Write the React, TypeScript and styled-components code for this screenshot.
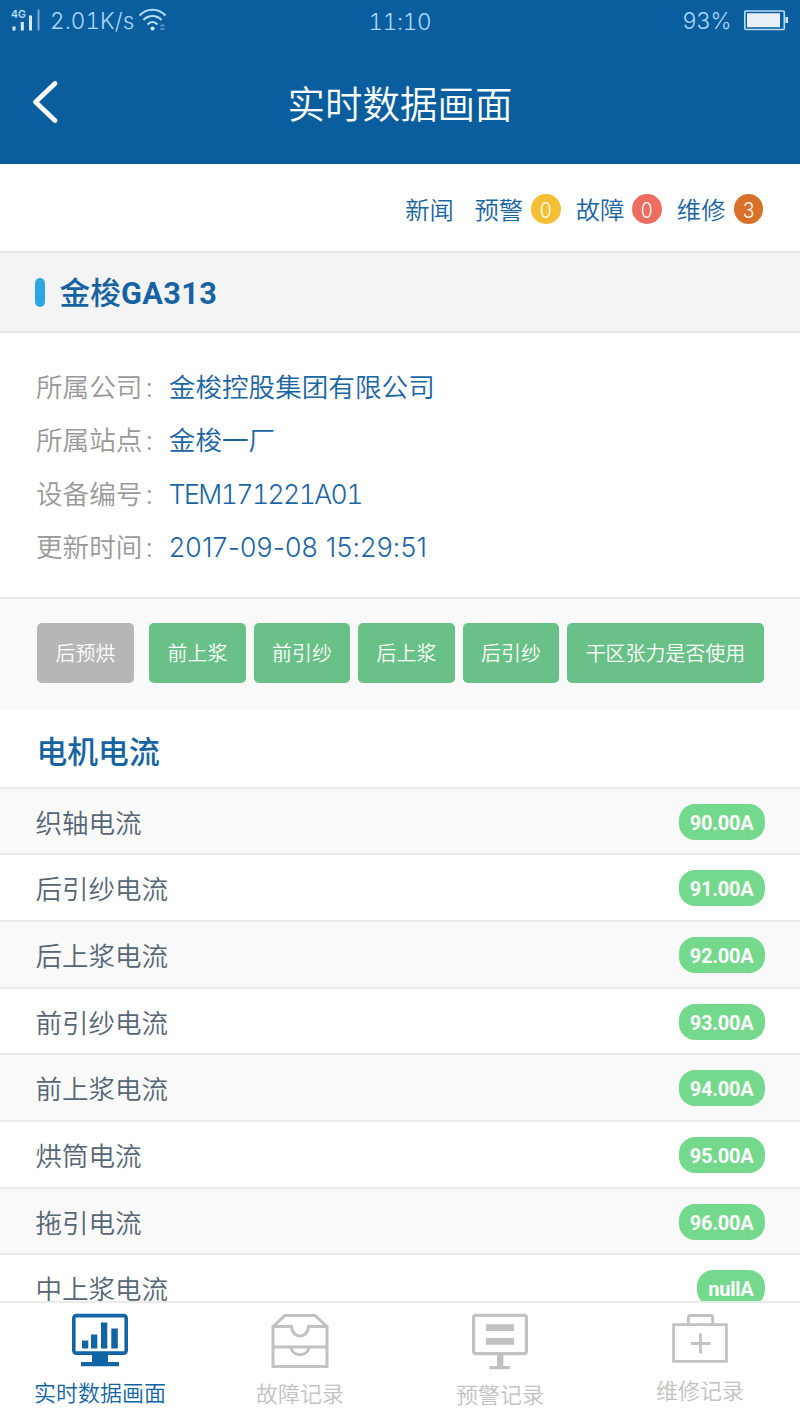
import React from "react";
import styled, { createGlobalStyle } from "styled-components";

const cjk = `"Noto Sans CJK SC", sans-serif`;

const GlobalStyle = createGlobalStyle`
  * { box-sizing: border-box; }
  body {
    margin: 0;
    background: #fff;
    font-family: Inter, ${cjk};
    font-weight: 350;
    overflow: hidden;
  }
`;

const Screen = styled.div`
  width: 800px;
  height: 1422px;
  display: flex;
  flex-direction: column;
  overflow: hidden;
  background: #fff;
`;

const Header = styled.header`
  flex: none;
  height: 164px;
  background: #0a5e9e;
`;

const StatusBar = styled.div`
  display: grid;
  grid-template-columns: 1fr auto 1fr;
  height: 42px;
  padding: 0 11px 0 11px;
  color: #a9d8fb;
  font-size: 22.5px;
  font-weight: 300;
  line-height: 42px;
`;

const StatusGroup = styled.div<{ $end?: boolean }>`
  display: flex;
  justify-content: ${(p) => (p.$end ? "flex-end" : "flex-start")};
`;

const StatusText = styled.span<{ $spacing?: number }>`
  letter-spacing: ${(p) => p.$spacing ?? 0}px;
  font-variant-numeric: tabular-nums;
  white-space: pre;
`;

const Clock = styled(StatusText)`
  padding: 1px 0 0 0;
`;

const SignalIcon = styled.svg`
  margin: 8px 9px 0 0;
`;

const WifiIcon = styled.svg`
  margin: 7px 0 0 4px;
`;

const BatteryIcon = styled.svg`
  margin: 9px 0 0 12px;
`;

const NavBar = styled.div`
  display: grid;
  grid-template-columns: 100px 1fr 100px;
  height: 122px;
`;

const BackButton = styled.button`
  display: flex;
  align-items: center;
  height: 120px;
  padding: 0 0 0 32px;
  border: 0;
  background: none;
`;

const PageTitle = styled.h1`
  margin: 0;
  color: #fff;
  font-size: 37.5px;
  font-weight: 350;
  line-height: 126px;
  text-align: center;
`;

const QuickLinks = styled.nav`
  flex: none;
  display: flex;
  justify-content: flex-end;
  height: 87px;
  padding: 0 37px 0 0;
`;

const QuickLink = styled.a`
  display: flex;
  margin-left: 15px;
  color: #1b65a3;
  font-size: 24.4px;
  line-height: 93px;

  &:first-child { margin-right: 5.5px; }
`;

const CountBadge = styled.span<{ $color: string }>`
  width: 29.4px;
  height: 30px;
  margin: 29.5px 0 0 8px;
  border-radius: 50%;
  background: ${(p) => p.$color};
  color: #fff;
  font-size: 22px;
  line-height: 32px;
  text-align: center;

  span {
    display: block;
    transform: scaleX(0.88);
  }
`;

const DeviceHeading = styled.div`
  flex: none;
  display: flex;
  align-items: center;
  gap: 15px;
  height: 82px;
  padding: 0 35px;
  border-top: 2px solid #e9e9e9;
  border-bottom: 2px solid #e9e9e9;
  background: #f4f4f4;
`;

const Marker = styled.span`
  width: 9.5px;
  height: 29px;
  border-radius: 5px;
  background: #31a6e4;
`;

const DeviceName = styled.h2`
  margin: 0;
  color: #1763a2;
  font-family: ${cjk};
  font-size: 30.7px;
  font-weight: 500;
  line-height: 78px;
  padding-top: 1px;
`;

const Model = styled.span`
  font-family: Roboto, sans-serif;
  font-weight: 700;
  letter-spacing: 0.4px;
`;

const InfoList = styled.dl`
  flex: none;
  height: 264px;
  margin: 0;
  padding: 27px 36px 0;
`;

const InfoRow = styled.div`
  display: flex;
  height: 53.33px;
  font-size: 26.6px;
  line-height: 54.6px;
`;

const InfoLabel = styled.dt`
  display: flex;
  width: 132.8px;
  color: #999;
`;

const Colon = styled.span`
  padding-left: 3px;
`;

const InfoValue = styled.dd<{ $spacing?: number; $tabular?: boolean }>`
  margin: 0;
  color: #1b65a3;
  font-variant-numeric: ${(p) => (p.$tabular ? "tabular-nums" : "normal")};
  letter-spacing: ${(p) => p.$spacing ?? 0}px;
  white-space: nowrap;
`;

const StateStrip = styled.div`
  flex: none;
  display: flex;
  gap: 7.6px;
  height: 113px;
  padding: 24px 36px 0 37px;
  border-top: 2px solid #ebebeb;
  background: #f9f9f9;
`;

const StateTag = styled.span<{ $off?: boolean }>`
  height: 60px;
  margin-right: ${(p) => (p.$off ? "7.5px" : "0")};
  padding: 0 18.55px;
  border-radius: 5px;
  background: ${(p) => (p.$off ? "#b6b6b6" : "#6ac187")};
  color: #fff;
  font-size: 19.95px;
  line-height: 63px;
  white-space: nowrap;
`;

const Readings = styled.section`
  flex: 1;
  min-height: 0;
  overflow: hidden;
`;

const ReadingsTitle = styled.h3`
  height: 76.7px;
  margin: 0;
  padding: 0 36.5px;
  color: #1763a2;
  font-size: 30.8px;
  font-weight: 500;
  line-height: 84px;
`;

const ReadingRow = styled.div`
  display: flex;
  justify-content: space-between;
  height: 66.67px;
  padding: 0 35.5px 0 35.5px;
  border-top: 2px solid #ebebeb;
  background: #fff;
  color: #566675;
  font-size: 26.5px;
  line-height: 69px;

  &:nth-child(even) { background: #f9f9f9; }
`;

const ReadingValue = styled.span`
  height: 36px;
  margin-top: 15px;
  padding: 0 11px;
  border-radius: 16px;
  background: #74d98d;
  color: #fff;
  font-family: Roboto, sans-serif;
  font-size: 20px;
  letter-spacing: -0.25px;
  font-weight: 700;
  line-height: 38px;
`;

const TabBar = styled.footer`
  flex: none;
  display: grid;
  grid-template-columns: repeat(4, 1fr);
  height: 121px;
  border-top: 2px solid #ebebeb;
  background: #fff;
`;

const Tab = styled.div<{ $active?: boolean }>`
  display: flex;
  flex-direction: column;
  align-items: center;
  padding-top: 10px;
  color: ${(p) => (p.$active ? "#1265a5" : "#c2c2c2")};
`;

const TabLabel = styled.span<{ $top: number }>`
  margin-top: ${(p) => p.$top}px;
  font-size: 22px;
  line-height: 32px;
`;

const quickLinks = [
  { label: "新闻" },
  { label: "预警", count: 0, color: "#f4bf35" },
  { label: "故障", count: 0, color: "#ed6e5f" },
  { label: "维修", count: 3, color: "#d87029" },
];

const info = [
  { label: "所属公司", value: "金梭控股集团有限公司" },
  { label: "所属站点", value: "金梭一厂" },
  { label: "设备编号", value: "TEM171221A01", spacing: -1.6, tabular: true },
  { label: "更新时间", value: "2017-09-08 15:29:51", spacing: 0.2 },
];

const states = ["后预烘", "前上浆", "前引纱", "后上浆", "后引纱", "干区张力是否使用"];

const readings = [
  ["织轴电流", "90.00A"],
  ["后引纱电流", "91.00A"],
  ["后上浆电流", "92.00A"],
  ["前引纱电流", "93.00A"],
  ["前上浆电流", "94.00A"],
  ["烘筒电流", "95.00A"],
  ["拖引电流", "96.00A"],
  ["中上浆电流", "nullA"],
];

const MonitorChartIcon = () => (
  <svg width="60" height="58" viewBox="0 0 60 58" fill="currentColor">
    <rect x="3.8" y="2.6" width="52.4" height="37.5" rx="2.5" fill="none" stroke="currentColor" strokeWidth="3.6" />
    <path d="M12 27.500h6.300v8H12zM21 21.500h6.300v14H21zM31 9.600h6.300v25.900H31zM41.300 15.500h6.500v20h-6.500zM22 42h16v7h11v4.300H11V49h11z" />
  </svg>
);

const DrawerIcon = () => (
  <svg width="60" height="58" viewBox="0 0 60 58" fill="none" stroke="currentColor" strokeWidth="3">
    <path d="M3 13.600h18.500C22 26 38 26 38.500 13.600H57v39.900H3zM3 13.600L15 2.500h30l12 11.100M3 34h54M21 34.500c1.500 9.500 16.500 9.500 18 0" />
  </svg>
);

const MonitorAlertIcon = () => (
  <svg width="60" height="58" viewBox="0 0 60 58" fill="currentColor">
    <rect x="3.600" y="2.400" width="52.800" height="38.200" rx="2" fill="none" stroke="currentColor" strokeWidth="3.200" />
    <path d="M16 11.200h28v6.800H16zM16 25h28v6.800H16zM27 41h6.400v12h6.600v3.300H19.500V53H27z" />
  </svg>
);

const RepairKitIcon = () => (
  <svg width="60" height="58" viewBox="0 0 60 58" fill="none" stroke="currentColor" strokeWidth="2.800">
    <path d="M3.600 11.600h52.800v36.800H3.600zM18.300 11V4.500a2 2 0 0 1 2-2h20.400a2 2 0 0 1 2 2V11M21 30.500h19.500M30.500 20.300v20" />
  </svg>
);

const tabs = [
  { label: "实时数据画面", Icon: MonitorChartIcon, top: 6, active: true },
  { label: "故障记录", Icon: DrawerIcon, top: 7 },
  { label: "预警记录", Icon: MonitorAlertIcon, top: 7.5 },
  { label: "维修记录", Icon: RepairKitIcon, top: 4 },
];

export default function App() {
  return (
    <Screen>
      <GlobalStyle />
      <Header>
        <StatusBar>
          <StatusGroup>
            <SignalIcon width="30" height="24" viewBox="0 0 30 24" fill="#d3ebfb">
              <text x="0" y="9.500" fontSize="10.500" fontWeight="600" fill="#b9e0fb">4G</text>
              <path d="M1.500 18.500h3v4h-3zM9.800 14h3v8.500h-3zM18 7.500h3v15h-3z" />
              <path d="M26.500 1.500h2v21h-2z" fill="#7fa9cf" />
            </SignalIcon>
            <StatusText $spacing={0.1}>2.01K/s</StatusText>
            <WifiIcon width="29" height="26" viewBox="0 0 29 26" fill="none" stroke="#b9e0fb" strokeWidth="2">
              <path d="M1.500 8.500C9 .8 20 .8 27.500 8.500M5.500 13c5-5.200 13-5.200 18 0M9.500 17.500c3-3.200 7-3.200 10 0" />
              <circle cx="14.500" cy="21.500" r="2" fill="#d3ebfb" stroke="none" />
              <path d="M22.500 18.500h4M22.500 22h4" stroke="#6fa3cc" strokeWidth="1.600" />
            </WifiIcon>
          </StatusGroup>
          <Clock $spacing={-0.3}>11:10</Clock>
          <StatusGroup $end>
            <StatusText $spacing={-0.5}>93%</StatusText>
            <BatteryIcon width="46" height="22" viewBox="0 0 46 22">
              <rect x="1.800" y="2" width="39.500" height="18.500" rx="1" fill="none" stroke="#b9dcf5" strokeWidth="1.600" />
              <path d="M4 4.300h33v14H4z" fill="#e8eff6" />
              <path d="M42.500 8h2.500v6h-2.500z" fill="#d3ebfb" />
            </BatteryIcon>
          </StatusGroup>
        </StatusBar>
        <NavBar>
          <BackButton aria-label="返回">
            <svg width="28" height="44" viewBox="0 0 28 44" fill="none" stroke="#fff" strokeWidth="4.800" strokeLinecap="round" strokeLinejoin="round">
              <path d="M23 3.500L3.500 22 23 40.500" />
            </svg>
          </BackButton>
          <PageTitle>实时数据画面</PageTitle>
        </NavBar>
      </Header>

      <QuickLinks>
        {quickLinks.map((l) => (
          <QuickLink key={l.label}>
            {l.label}
            {l.color && (
              <CountBadge $color={l.color}>
                <span>{l.count}</span>
              </CountBadge>
            )}
          </QuickLink>
        ))}
      </QuickLinks>

      <DeviceHeading>
        <Marker />
        <DeviceName>
          金梭<Model>GA313</Model>
        </DeviceName>
      </DeviceHeading>

      <InfoList>
        {info.map((r) => (
          <InfoRow key={r.label}>
            <InfoLabel>
              {r.label}
              <Colon>:</Colon>
            </InfoLabel>
            <InfoValue $spacing={r.spacing} $tabular={r.tabular}>{r.value}</InfoValue>
          </InfoRow>
        ))}
      </InfoList>

      <StateStrip>
        {states.map((s, i) => (
          <StateTag key={s} $off={i === 0}>{s}</StateTag>
        ))}
      </StateStrip>

      <Readings>
        <ReadingsTitle>电机电流</ReadingsTitle>
        {readings.map(([name, value]) => (
          <ReadingRow key={name}>
            <span>{name}</span>
            <ReadingValue>{value}</ReadingValue>
          </ReadingRow>
        ))}
      </Readings>

      <TabBar>
        {tabs.map(({ label, Icon, top, active }) => (
          <Tab key={label} $active={active}>
            <Icon />
            <TabLabel $top={top}>{label}</TabLabel>
          </Tab>
        ))}
      </TabBar>
    </Screen>
  );
}
